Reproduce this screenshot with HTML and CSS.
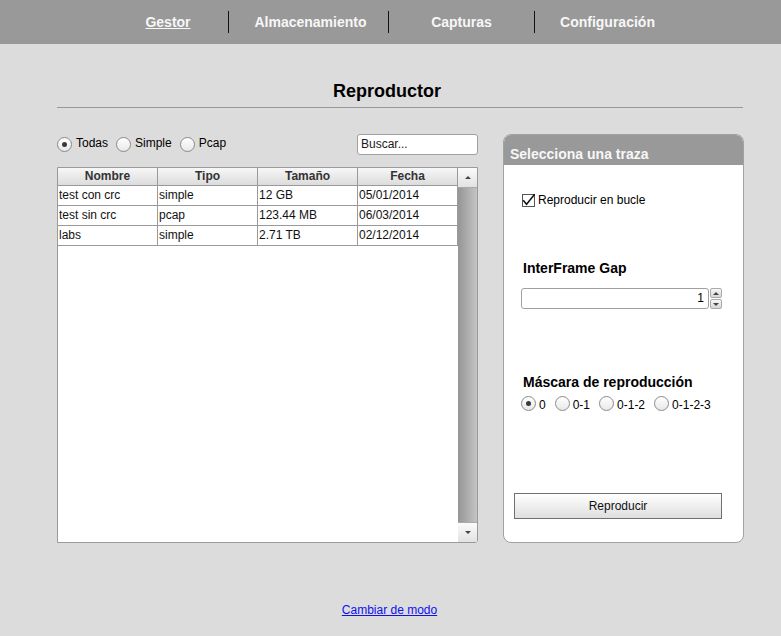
FILE: index.html
```html
<!DOCTYPE html>
<html lang="es">
<head>
<meta charset="utf-8">
<title>Reproductor</title>
<link rel="stylesheet" href="styles.css">
</head>
<body>
<nav class="topnav">
  <a class="navitem nav-gestor active" href="#">Gestor</a>
  <a class="navitem nav-alm" href="#">Almacenamiento</a>
  <a class="navitem nav-cap" href="#">Capturas</a>
  <a class="navitem nav-conf" href="#">Configuración</a>
</nav>
<main class="page">
  <h1 class="title">Reproductor</h1>
  <div class="content">
    <section class="leftcol">
      <div class="toolbar">
        <div class="radios">
          <label class="radio"><span class="dot checked"></span>Todas</label>
          <label class="radio"><span class="dot"></span>Simple</label>
          <label class="radio"><span class="dot"></span>Pcap</label>
        </div>
        <div class="search">Buscar...</div>
      </div>
      <div class="grid">
        <div class="gridbody">
          <table class="traces">
            <thead>
              <tr><th>Nombre</th><th>Tipo</th><th>Tamaño</th><th>Fecha</th></tr>
            </thead>
            <tbody>
              <tr><td>test con crc</td><td>simple</td><td>12 GB</td><td>05/01/2014</td></tr>
              <tr><td>test sin crc</td><td>pcap</td><td>123.44 MB</td><td>06/03/2014</td></tr>
              <tr><td>labs</td><td>simple</td><td>2.71 TB</td><td>02/12/2014</td></tr>
            </tbody>
          </table>
        </div>
        <div class="scrollbar">
          <div class="sbtn"><span class="tri up"></span></div>
          <div class="track"></div>
          <div class="sbtn bottom"><span class="tri down"></span></div>
        </div>
      </div>
    </section>
    <aside class="panel">
      <div class="panelhead">Selecciona una traza</div>
      <div class="panelbody">
        <label class="check">
          <svg class="checkbox" width="15" height="15" viewBox="0 0 15 15">
            <rect x="1.5" y="2.5" width="12" height="12" fill="#fff" stroke="#555" stroke-width="1"/>
            <path d="M2.2 8.2 L5.6 12.2 L13.6 2.2" fill="none" stroke="#111" stroke-width="1.5"/>
          </svg>
          Reproducir en bucle
        </label>
        <h2 class="subhead ifg">InterFrame Gap</h2>
        <div class="spinrow">
          <div class="numfield">1</div>
          <div class="spinner">
            <span class="spin"><span class="tri up"></span></span>
            <span class="spin"><span class="tri down"></span></span>
          </div>
        </div>
        <h2 class="subhead mask">Máscara de reproducción</h2>
        <div class="maskradios">
          <label class="radio"><span class="dot checked"></span>0</label>
          <label class="radio"><span class="dot"></span>0-1</label>
          <label class="radio"><span class="dot"></span>0-1-2</label>
          <label class="radio"><span class="dot"></span>0-1-2-3</label>
        </div>
        <button class="playbtn" type="button">Reproducir</button>
      </div>
    </aside>
  </div>
  <footer class="footer"><a href="#" class="modelink">Cambiar de modo</a></footer>
</main>
</body>
</html>
```
FILE: styles.css
```css
* { box-sizing: border-box; }
html, body { margin: 0; padding: 0; }
body {
  background: #dcdcdc;
  font-family: "Liberation Sans", Arial, sans-serif;
  color: #000;
  width: 781px;
  height: 636px;
  overflow: hidden;
}

/* top navigation */
.topnav {
  height: 44px;
  background: #999999;
  display: grid;
  grid-template-columns: 121px 160px 146px 145px;
  align-content: center;
  padding-left: 108px;
}
.navitem {
  color: #f7f7f7;
  font-weight: bold;
  font-size: 14px;
  line-height: 22px;
  height: 22px;
  text-align: center;
  text-decoration: none;
}
.nav-gestor, .nav-alm, .nav-cap { border-right: 1px solid #111; }
.nav-alm { padding-left: 4px; }
.navitem.active { text-decoration: underline; }

/* page */
.page {
  padding: 34px 38px 0 57px;
}
.title {
  margin: 0;
  font-size: 18px;
  line-height: 26px;
  text-align: center;
  font-weight: bold;
  padding: 0 26px 3px 0;
  border-bottom: 1px solid #999;
}
.content {
  display: flex;
  gap: 25px;
  margin-top: 26px;
}

/* left column */
.leftcol { width: 421px; flex: none; }
.toolbar {
  display: flex;
  justify-content: space-between;
  align-items: flex-start;
  height: 21px;
}
.radios { display: flex; gap: 8px; padding-top: 1px; }
.radio {
  display: flex;
  align-items: flex-start;
  gap: 4px;
  font-size: 12px;
  line-height: 16px;
}
.radios .dot { margin-top: 2px; }
.dot {
  width: 15px;
  height: 15px;
  border-radius: 50%;
  border: 1px solid #8a8a8a;
  background: linear-gradient(#ffffff, #e8e8e8);
  position: relative;
  flex: none;
}
.dot.checked::after {
  content: "";
  position: absolute;
  left: 4px;
  top: 4px;
  width: 5px;
  height: 5px;
  border-radius: 50%;
  background: #3a3a3a;
}
.search {
  width: 121px;
  height: 21px;
  border: 1px solid #a0a0a0;
  border-radius: 3px;
  background: #fff;
  font-size: 12px;
  line-height: 19px;
  padding-left: 3px;
  color: #1a1a1a;
}

.grid {
  margin-top: 12px;
  height: 376px;
  border: 1px solid #9a9a9a;
  border-bottom-right-radius: 3px;
  display: flex;
  background: #fff;
}
.gridbody { width: 400px; flex: none; }
.traces {
  border-collapse: separate;
  border-spacing: 0;
  table-layout: fixed;
  width: 400px;
  font-size: 12px;
}
.traces th, .traces td {
  border-right: 1px solid #9a9a9a;
  border-bottom: 1px solid #9a9a9a;
  width: 100px;
  padding: 0 1px;
  white-space: nowrap;
  overflow: hidden;
}
.traces th {
  height: 18px;
  line-height: 15px;
  font-weight: bold;
  color: #333;
  text-align: center;
  background: linear-gradient(#f7f7f7, #dcdcdc);
}
.traces td {
  height: 20px;
  line-height: 19px;
  text-align: left;
  color: #111;
}

.scrollbar {
  width: 19px;
  flex: none;
  display: flex;
  flex-direction: column;
}
.sbtn {
  height: 20px;
  flex: none;
  background: linear-gradient(#fbfbfb, #e2e2e2);
  border-bottom: 1px solid #aaa;
  display: flex;
  align-items: center;
  justify-content: center;
}
.sbtn.bottom { border-bottom: none; border-top: 1px solid #aaa; }
.track {
  flex: 1;
  background: linear-gradient(to right, #959595, #c4c4c4);
}
.tri {
  width: 0;
  height: 0;
  border-left: 3px solid transparent;
  border-right: 3px solid transparent;
}
.tri.up { border-bottom: 3px solid #444; }
.tri.down { border-top: 3px solid #444; }

/* right panel */
.panel {
  width: 241px;
  flex: none;
  height: 409px;
  background: #fff;
  border: 1px solid #a2a2a2;
  border-radius: 8px;
  overflow: hidden;
  display: flex;
  flex-direction: column;
}
.panelhead {
  background: #999999;
  color: #f7f7f7;
  font-weight: bold;
  font-size: 14px;
  line-height: 22px;
  padding: 8px 0 0 6px;
  height: 30px;
  flex: none;
}
.panelbody {
  padding: 27px 0 0 17px;
  display: flex;
  flex-direction: column;
  align-items: flex-start;
}
.check {
  display: flex;
  align-items: center;
  gap: 2px;
  font-size: 12px;
  line-height: 16px;
}
.checkbox { display: block; margin-top: -1px; }
.subhead {
  margin: 0;
  font-size: 14px;
  line-height: 18px;
  font-weight: bold;
  padding-left: 2px;
}
.subhead.ifg { margin-top: 51px; }
.subhead.mask { margin-top: 64px; }
.spinrow {
  margin-top: 11px;
  display: flex;
  gap: 1px;
}
.numfield {
  width: 188px;
  height: 21px;
  border: 1px solid #a0a0a0;
  border-radius: 3px;
  font-size: 12px;
  line-height: 19px;
  text-align: right;
  padding-right: 4px;
  background: #fff;
}
.spinner {
  display: flex;
  flex-direction: column;
  gap: 1px;
}
.spin {
  width: 12px;
  height: 10px;
  border: 1px solid #aaa;
  border-radius: 2px;
  background: linear-gradient(#f8f8f8, #d6d6d6);
  display: flex;
  align-items: center;
  justify-content: center;
}
.maskradios {
  margin-top: 6px;
  display: flex;
  gap: 9px;
}
.maskradios .radio { gap: 3px; line-height: 17px; }
.maskradios .dot { margin-top: -1px; }
.playbtn {
  margin-top: 79px;
  margin-left: -7px;
  width: 208px;
  height: 26px;
  border: 1px solid #707070;
  border-radius: 0;
  background: linear-gradient(#ffffff, #dedede);
  font-family: "Liberation Sans", Arial, sans-serif;
  font-size: 12px;
  color: #111;
  padding: 0;
}

.footer {
  text-align: center;
  margin-top: 59px;
  padding-right: 21px;
  font-size: 12px;
  line-height: 16px;
}
.modelink { color: #1010ee; text-decoration: underline; }
```
